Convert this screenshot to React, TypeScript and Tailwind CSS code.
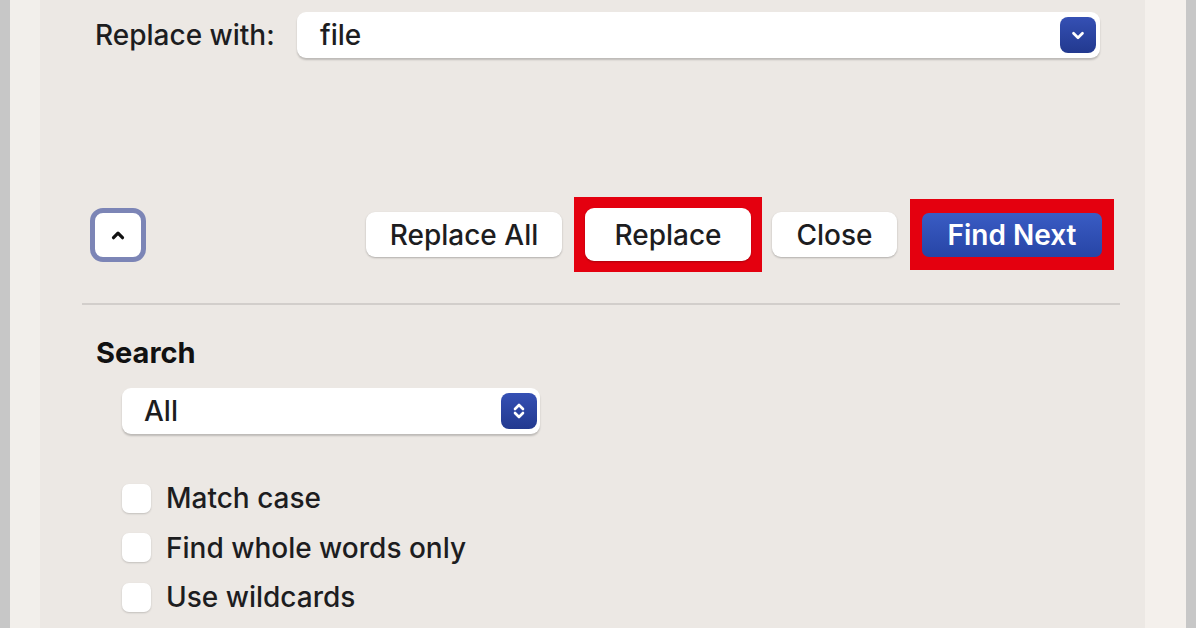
import React from "react";

const ChevronDown = () => (
  <svg viewBox="0 0 20 20" className="w-[18px] h-[18px]" fill="none" stroke="white" strokeWidth={3} strokeLinecap="round" strokeLinejoin="round">
    <path d="M5 8l5 5 5-5" />
  </svg>
);

const UpDown = () => (
  <svg viewBox="0 0 20 20" className="w-[20px] h-[22px]" fill="none" stroke="white" strokeWidth={2.6} strokeLinecap="round" strokeLinejoin="round">
    <path d="M6 8l4-4 4 4" />
    <path d="M6 12l4 4 4-4" />
  </svg>
);

const BlueKnob = ({ children }: { children: React.ReactNode }) => (
  <div className="w-[36px] h-[36px] rounded-[8px] bg-gradient-to-b from-[#3550b4] to-[#22398f] flex items-center justify-center ring-2 ring-white/80">
    {children}
  </div>
);

const PlainButton = ({ label, className = "" }: { label: string; className?: string }) => (
  <div className={`h-[45px] rounded-[9px] bg-white shadow-[0_1px_2px_rgba(0,0,0,0.25)] flex items-center justify-center text-[28px] font-medium text-[#1d1d1f] ${className}`}>
    {label}
  </div>
);

const Option = ({ label }: { label: string }) => (
  <div className="h-[49.5px] flex items-center gap-[15px]">
    <div className="w-[29px] h-[29px] rounded-[7px] bg-white shadow-[0_1px_2px_rgba(0,0,0,0.18)]" />
    <span className="text-[28px] font-medium text-[#1d1d1f]">{label}</span>
  </div>
);

export default function App() {
  return (
    <div
      className="w-[1196px] h-[628px] overflow-hidden flex bg-[#ece8e4]"
      style={{ fontFamily: "Inter, 'Liberation Sans', sans-serif" }}
    >
      <div className="w-[10px] bg-[#c7c7c7]" />
      <div className="w-[30px] bg-[#f2efeb]" />

      <div className="flex-1 flex flex-col">
        {/* Replace with */}
        <div className="mt-[12px] pl-[55px] pr-[45px] flex items-center">
          <span className="w-[202px] text-[28px] font-medium text-[#1d1d1f]">Replace with:</span>
          <div className="flex-1 h-[46px] rounded-[9px] bg-white shadow-[0_2px_2px_rgba(0,0,0,0.2)] flex items-center pl-[23px] pr-[4px]">
            <span className="flex-1 text-[28px] font-medium text-[#1d1d1f]">file</span>
            <BlueKnob>
              <ChevronDown />
            </BlueKnob>
          </div>
        </div>

        {/* Action buttons */}
        <div className="mt-[139px] pl-[50px] pr-[31px] h-[75px] flex items-center">
          <div className="w-[56px] h-[54px] rounded-[13px] border-[5px] border-[#7c85b6] bg-white flex items-center justify-center">
            <svg viewBox="0 0 20 20" className="w-[18px] h-[18px]" fill="none" stroke="#111" strokeWidth={3.6} strokeLinecap="round" strokeLinejoin="round">
              <path d="M5 13l5-5 5 5" />
            </svg>
          </div>
          <div className="flex-1" />
          <PlainButton label="Replace All" className="w-[196px]" />
          <div className="ml-[12px] w-[188px] h-[75px] bg-[#e4000f] p-[11px] flex items-center">
            <PlainButton label="Replace" className="w-full h-[53px] rounded-[3px]" />
          </div>
          <PlainButton label="Close" className="ml-[10px] w-[125px]" />
          <div className="ml-[13px] w-[204px] h-[71px] bg-[#e4000f] p-[12px] flex items-center">
            <div className="w-full h-[44px] rounded-[7px] bg-gradient-to-b from-[#3a5cc4] to-[#2745a6] flex items-center justify-center text-[28px] font-semibold text-white">
              Find Next
            </div>
          </div>
        </div>

        {/* Divider */}
        <div className="mt-[31px] ml-[42px] mr-[25px] h-[2px] shrink-0 bg-[#d2cecb]" />

        {/* Search */}
        <div className="mt-[26px] pl-[56px] text-[29px] font-bold text-[#111]">Search</div>
        <div className="mt-[13px] ml-[82px] w-[418px] h-[46px] shrink-0 rounded-[9px] bg-white shadow-[0_2px_2px_rgba(0,0,0,0.2)] flex items-center pl-[22px] pr-[3px]">
          <span className="flex-1 text-[28px] font-medium text-[#1d1d1f]">All</span>
          <BlueKnob>
            <UpDown />
          </BlueKnob>
        </div>

        {/* Options */}
        <div className="mt-[40px] pl-[82px] flex flex-col">
          <Option label="Match case" />
          <Option label="Find whole words only" />
          <Option label="Use wildcards" />
          <div className="h-[49.5px] flex items-center">
            <div className="w-[29px] h-[29px] rounded-[7px] bg-white shadow-[0_1px_2px_rgba(0,0,0,0.18)]" />
          </div>
        </div>
      </div>

      <div className="w-[41px] bg-[#f4f0ec]" />
      <div className="w-[10px] bg-[#c7c7c7]" />
    </div>
  );
}
